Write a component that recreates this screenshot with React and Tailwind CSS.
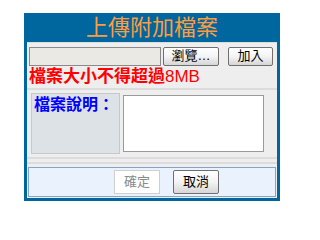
import React from "react";

const font = { fontFamily: '"Liberation Sans", "Noto Sans CJK TC", sans-serif' };

function Btn({ children, className = "", disabled = false }) {
  if (disabled) {
    return (
      <button
        disabled
        className={`h-[24px] w-[46px] border border-[#cfcfcf] bg-white text-[13px] text-[#8a8a8a] ${className}`}
      >
        {children}
      </button>
    );
  }
  return (
    <button
      className={`flex items-center justify-center whitespace-nowrap rounded-[2px] border border-[#6f6f6f] bg-gradient-to-b from-white via-[#f4f4f4] to-[#d6d6d6] text-[13px] text-black ${className}`}
    >
      {children}
    </button>
  );
}

export default function App() {
  return (
    <div className="w-[317px] h-[229px] bg-white" style={font}>
      <div className="ml-[24px] mt-[13px] w-[256px] border-x-[3px] border-b-[3px] border-[#00669e] bg-[#00669e]">
        {/* Header */}
        <div className="h-[29px] flex items-center justify-center text-[22px] leading-none text-[#ff9c3f]">
          上傳附加檔案
        </div>

        {/* Body */}
        <div className="bg-[#eeeeee] pb-[1px]">
          <div className="h-[1px] bg-[#dcdcdc]" />
          {/* File row */}
          <div className="flex items-center pl-[2px] pt-[3px] h-[23px]">
            <div className="w-[132px] h-[19px] border border-[#8a8a8a] bg-[#ebe9e3]" />
            <Btn className="ml-[2px] w-[56px] h-[19px]">瀏覽…</Btn>
            <Btn className="ml-[9px] w-[45px] h-[19px]">加入</Btn>
          </div>

          {/* Size note */}
          <div className="pl-[2px] h-[21px] leading-[21px] text-[17px] font-bold text-[#ff0000] whitespace-nowrap">
            檔案大小不得超過<span className="font-normal">8MB</span>
          </div>

          <div className="mt-[1px] h-[2px] bg-[#dcdcdc]" />

          {/* Description row */}
          <div className="flex pl-[4px] pt-[3px]">
            <div className="w-[89px] h-[61px] border border-[#c8c8c8] bg-[#dde2e7] pl-[2px] pt-[1px] text-[16px] font-bold text-[#0000ff] leading-[20px]">
              檔案說明：
            </div>
            <div className="ml-[3px] mt-[2px] w-[141px] h-[57px] border border-[#9a9a9a] bg-white" />
          </div>

          <div className="mt-[3px] h-[2px] bg-[#dcdcdc]" />
          <div className="mt-[3px] h-[2px] bg-[#dcdcdc]" />

          {/* Footer */}
          <div className="mx-[1px] mt-[3px] h-[30px] border border-[#86a3c8] bg-[#eaf3fd] flex items-center pl-[85px]">
            <Btn disabled>確定</Btn>
            <Btn className="ml-[13px] w-[46px] h-[24px]">取消</Btn>
          </div>
        </div>
      </div>
    </div>
  );
}
